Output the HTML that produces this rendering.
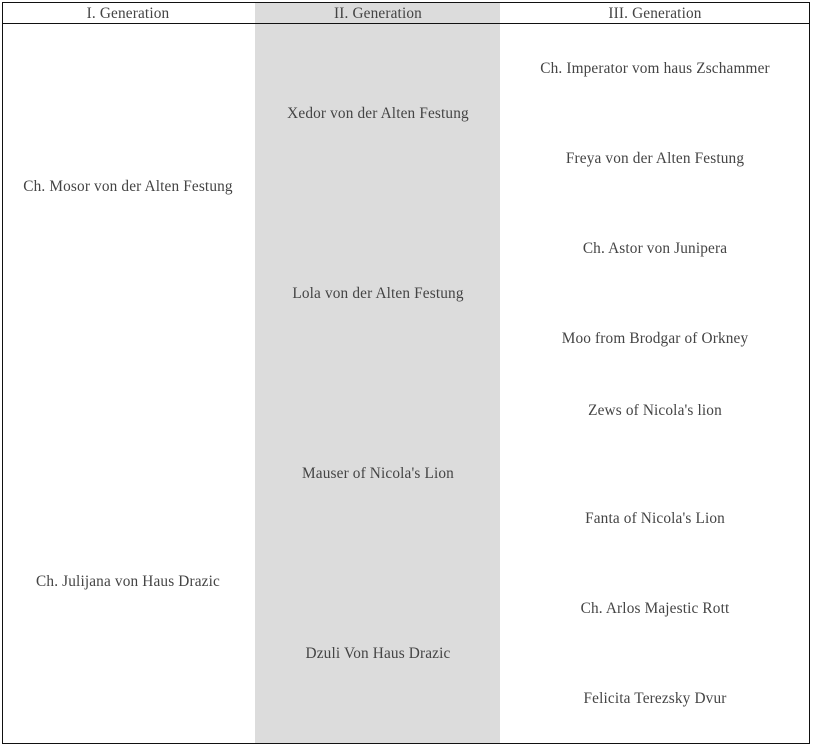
<!DOCTYPE html>
<html><head><style>
body{margin:0;width:814px;height:746px;background:#fff;position:relative;font-family:"Liberation Serif",serif;font-size:15.3px;color:#444;overflow:hidden}
.box{position:absolute;left:2px;top:2px;width:806px;height:740px;border:1.5px solid #111}
.gray{position:absolute;left:255px;top:2px;width:245px;height:742px;background:#dcdcdc}
.hl{position:absolute;left:2px;top:23px;width:808px;height:0;border-top:1.5px solid #111}
.t{position:absolute;transform:translate(-50%,-50%);white-space:nowrap;letter-spacing:0.15px}
</style></head><body>
<div class="gray"></div>
<div class="box"></div>
<div class="hl"></div>
<div class="t" style="left:128px;top:14px">I. Generation</div>
<div class="t" style="left:378px;top:14px">II. Generation</div>
<div class="t" style="left:655px;top:14px">III. Generation</div>
<div class="t" style="left:128px;top:187px">Ch. Mosor von der Alten Festung</div>
<div class="t" style="left:128px;top:582px">Ch. Julijana von Haus Drazic</div>
<div class="t" style="left:378px;top:114px">Xedor von der Alten Festung</div>
<div class="t" style="left:378px;top:294px">Lola von der Alten Festung</div>
<div class="t" style="left:378px;top:474px">Mauser of Nicola's Lion</div>
<div class="t" style="left:378px;top:654px">Dzuli Von Haus Drazic</div>
<div class="t" style="left:655px;top:69px">Ch. Imperator vom haus Zschammer</div>
<div class="t" style="left:655px;top:159px">Freya von der Alten Festung</div>
<div class="t" style="left:655px;top:249px">Ch. Astor von Junipera</div>
<div class="t" style="left:655px;top:339px">Moo from Brodgar of Orkney</div>
<div class="t" style="left:655px;top:411px">Zews of Nicola's lion</div>
<div class="t" style="left:655px;top:519px">Fanta of Nicola's Lion</div>
<div class="t" style="left:655px;top:609px">Ch. Arlos Majestic Rott</div>
<div class="t" style="left:655px;top:699px">Felicita Terezsky Dvur</div>
</body></html>
